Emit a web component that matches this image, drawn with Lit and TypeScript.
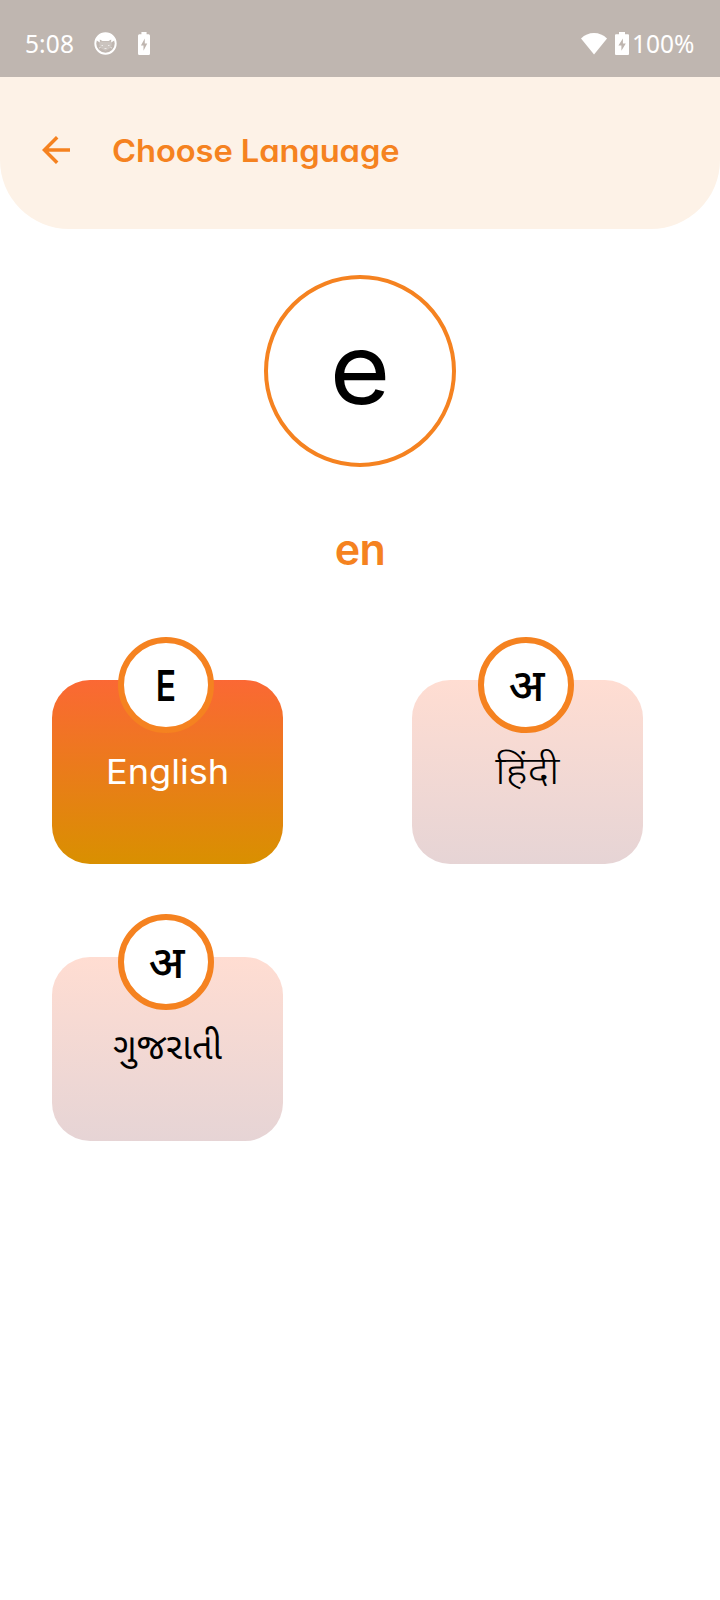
import { LitElement, html, css, svg } from "lit";
import { customElement, property } from "lit/decorators.js";

const bolt = svg`<path fill="#bfb6b0" d="M7.9 6.6 3.4 13.4h3v5.4l4.4-7.2H7.9z"/>`;

@customElement("status-bar")
class StatusBar extends LitElement {
  static styles = css`
    :host {
      display: flex;
      align-items: center;
      box-sizing: border-box;
      height: 77px;
      padding: 10px 24px 0 25px;
      background: #bfb6b0;
      color: #fff;
      font: 400 24.5px/33px "Noto Sans", sans-serif;
    }
    .time { width: 69px; letter-spacing: 0.1px; }
    .cat { margin-right: 21px; }
    .spacer { flex: 1; }
    .wifi { margin-right: 8px; }
    .pct { width: 64px; margin-left: 3px; white-space: nowrap; }
    svg { display: block; flex: none; }
  `;
  render() {
    return html`
      <span class="time">5:08</span>
      <svg class="cat" width="23" height="23" viewBox="0 0 23 23">
        <circle cx="11.5" cy="11.5" r="10.2" fill="none" stroke="#fff" stroke-width="1.9" />
        <path fill="#fff" d="M2 8C3.5 3.5 7.5 1 11.5 1s8 2.5 9.5 7l-3.8 2.5V7.4L14.6 9H8.4L5.8 7.4v3.1z" />
        <path fill="#fff" opacity=".2" d="M5.5 9.5h12q1.500 7-6 9.300-7.500-2.300-6-9.300z" />
        <path stroke="#fff" stroke-width="1" opacity=".65" d="M7.500 13.500H9M14 13.500h1.500M10.500 16.500h2M5 16l1.500-.5M16.500 15.500 18 16" />
      </svg>
      <svg width="12" height="23" viewBox="0 0 14 23" preserveAspectRatio="none">
        <path fill="#fff" d="M4 0h6v2.200h2.500q1.500 0 1.500 1.500v17.800q0 1.500-1.500 1.500h-11Q0 23 0 21.500V3.700q0-1.500 1.500-1.500H4z" />${bolt}
      </svg>
      <span class="spacer"></span>
      <svg class="wifi" width="26" height="22" viewBox="0 0 26 22">
        <path fill="#fff" d="M0 5.500Q5.500 0 13 0t13 5.500L13 21.500z" />
      </svg>
      <svg width="14" height="23" viewBox="0 0 14 23">
        <path fill="#fff" d="M4 0h6v2.200h3q1 0 1 1v18.800q0 1-1 1H1q-1 0-1-1V3.200q0-1 1-1h3z" />${bolt}
      </svg>
      <span class="pct">100%</span>
    `;
  }
}

@customElement("language-card")
class LanguageCard extends LitElement {
  @property() glyph = "";
  @property() label = "";
  @property() script = "latin";
  @property({ type: Boolean, reflect: true }) selected = false;

  static styles = css`
    :host {
      display: flex;
      flex-direction: column;
      width: 230.5px;
      font-family: "Inter", "Noto Sans Devanagari", "Noto Sans Gujarati", "Noto Sans", sans-serif;
      font-feature-settings: "cv11";
    }
    .badge {
      z-index: 1;
      display: flex;
      align-items: center;
      justify-content: center;
      box-sizing: border-box;
      width: 96px;
      height: 96px;
      margin: 0 0 -53px 65.5px;
      border: 6px solid #f58220;
      border-radius: 50%;
      background: #fff;
      color: #000;
      font-size: 43px;
      line-height: 50px;
      font-weight: 600;
    }
    .glyph { transform: scaleX(0.78); }
    .glyph.indic { transform: translate(0.5px, 0); font-size: 45.5px; font-weight: 500; }
    .card {
      box-sizing: border-box;
      height: 183.5px;
      padding-top: 68px;
      border-radius: 38px;
      background: linear-gradient(#ffddd2, #e6d4d5);
      color: #000;
      text-align: center;
      font-size: 33.5px;
      line-height: 48px;
    }
    :host([selected]) .card {
      background: linear-gradient(#fb6834, #d99000);
      color: #fff;
    }
    .text { display: inline-block; transform: translate(-0.5px, 0) scaleX(1.08); }
    .hindi { font-size: 38.5px; font-weight: 350; transform: translate(-0.5px, -2px) scaleX(1.11); }
    .gujarati { font-size: 36px; transform: translate(0, -3.5px); }
  `;
  render() {
    return html`
      <div class="badge"><span class="glyph ${this.script === "latin" ? "" : "indic"}">${this.glyph}</span></div>
      <div class="card"><span class="text ${this.script}">${this.label}</span></div>
    `;
  }
}

@customElement("app-root")
class AppRoot extends LitElement {
  static styles = css`
    :host {
      display: block;
      min-height: 1600px;
      background: #fff;
      font-family: "Inter", sans-serif;
      font-feature-settings: "cv11";
    }
    .header {
      display: flex;
      align-items: center;
      box-sizing: border-box;
      height: 152px;
      padding: 0 0 6px 42px;
      border-radius: 0 0 69px 69px;
      background: #fdf2e7;
      color: #f58220;
    }
    .back { display: block; width: 28px; height: 28px; margin-right: 42px; }
    .title {
      margin: 0;
      font-size: 31px;
      line-height: 40px;
      font-weight: 580;
      letter-spacing: -0.1px;
      transform: translateY(0.5px) scaleX(1.055);
      transform-origin: left;
    }
    .current { display: flex; flex-direction: column; align-items: center; padding-top: 46px; }
    .ring {
      display: flex;
      align-items: center;
      justify-content: center;
      box-sizing: border-box;
      width: 192px;
      height: 192px;
      border: 4px solid #f58220;
      border-radius: 50%;
      color: #000;
      font-size: 98px;
      line-height: 120px;
    }
    .ring span { transform: translate(0.5px, -2.5px) scaleX(1.06); }
    .code { margin: 55px 0 1px; color: #f58220; font-size: 43px; line-height: 54px; font-weight: 620; letter-spacing: -0.5px; }
    .grid {
      display: grid;
      grid-template-columns: 231px 231px;
      column-gap: 129px;
      row-gap: 50.5px;
      padding: 60px 0 0 52.4px;
    }
  `;
  render() {
    return html`
      <status-bar></status-bar>
      <header class="header">
        <svg class="back" viewBox="0 0 28 28" fill="none" stroke="#f58220" stroke-width="3.5">
          <path d="M28 14H2.500M15.200 1.200 2.400 14l12.800 12.800" />
        </svg>
        <h1 class="title">Choose Language</h1>
      </header>
      <section class="current">
        <div class="ring"><span>e</span></div>
        <div class="code">en</div>
      </section>
      <main class="grid">
        <language-card glyph="E" label="English" selected></language-card>
        <language-card glyph="अ" label="हिंदी" script="hindi"></language-card>
        <language-card glyph="अ" label="ગુજરાતી" script="gujarati"></language-card>
      </main>
    `;
  }
}
